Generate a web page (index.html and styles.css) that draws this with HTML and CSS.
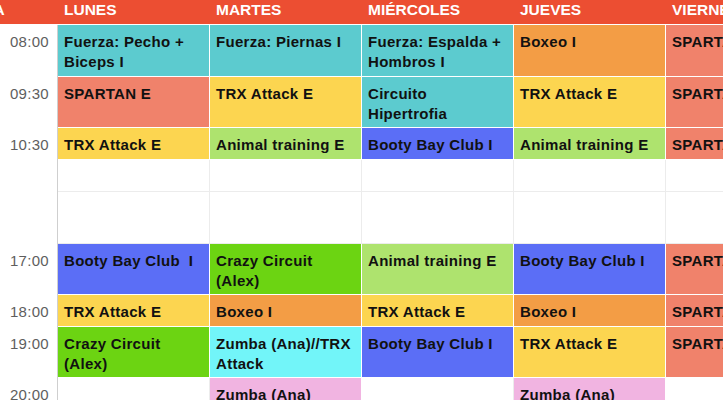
FILE: index.html
```html
<!DOCTYPE html>
<html lang="es">
<head>
<meta charset="utf-8">
<title>Horario</title>
<link rel="stylesheet" href="styles.css">
</head>
<body>
<div class="schedule">
  <div class="head head-time"><span class="clip">HORA</span></div>
  <div class="head">LUNES</div>
  <div class="head">MARTES</div>
  <div class="head">MIÉRCOLES</div>
  <div class="head">JUEVES</div>
  <div class="head">VIERNES</div>

  <div class="time">08:00</div>
  <div class="cell teal">Fuerza: Pecho + Biceps I</div>
  <div class="cell teal">Fuerza: Piernas I</div>
  <div class="cell teal">Fuerza: Espalda + Hombros I</div>
  <div class="cell orange">Boxeo I</div>
  <div class="cell salmon">SPARTAN E</div>

  <div class="time">09:30</div>
  <div class="cell salmon">SPARTAN E</div>
  <div class="cell yellow">TRX Attack E</div>
  <div class="cell teal">Circuito Hipertrofia</div>
  <div class="cell yellow">TRX Attack E</div>
  <div class="cell salmon">SPARTAN E</div>

  <div class="time">10:30</div>
  <div class="cell yellow">TRX Attack E</div>
  <div class="cell lime">Animal training E</div>
  <div class="cell blue">Booty Bay Club I</div>
  <div class="cell lime">Animal training E</div>
  <div class="cell salmon">SPARTAN E</div>

  <div class="time"></div>
  <div class="cell empty"></div>
  <div class="cell empty"></div>
  <div class="cell empty"></div>
  <div class="cell empty"></div>
  <div class="cell empty"></div>

  <div class="time"></div>
  <div class="cell empty"></div>
  <div class="cell empty"></div>
  <div class="cell empty"></div>
  <div class="cell empty"></div>
  <div class="cell empty"></div>

  <div class="time">17:00</div>
  <div class="cell blue">Booty Bay Club&nbsp; I</div>
  <div class="cell green">Crazy Circuit (Alex)</div>
  <div class="cell lime">Animal training E</div>
  <div class="cell blue">Booty Bay Club I</div>
  <div class="cell salmon">SPARTAN E</div>

  <div class="time">18:00</div>
  <div class="cell yellow">TRX Attack E</div>
  <div class="cell orange">Boxeo I</div>
  <div class="cell yellow">TRX Attack E</div>
  <div class="cell orange">Boxeo I</div>
  <div class="cell salmon">SPARTAN E</div>

  <div class="time">19:00</div>
  <div class="cell green">Crazy Circuit (Alex)</div>
  <div class="cell cyan">Zumba (Ana)//TRX Attack</div>
  <div class="cell blue">Booty Bay Club I</div>
  <div class="cell yellow">TRX Attack E</div>
  <div class="cell salmon">SPARTAN E</div>

  <div class="time">20:00</div>
  <div class="cell empty"></div>
  <div class="cell pink">Zumba (Ana)</div>
  <div class="cell empty"></div>
  <div class="cell pink">Zumba (Ana)</div>
  <div class="cell empty"></div>
</div>
</body>
</html>
```
FILE: styles.css
```css
html, body {
  margin: 0;
  padding: 0;
  background: #ffffff;
  overflow: hidden;
}

.schedule {
  display: grid;
  grid-template-columns: 58px repeat(5, 152px);
  grid-template-rows: 25px 52px 51px 32px 32px 52px 51px 32px 51px 51px;
  width: 818px;
  font-family: "Liberation Sans", Arial, sans-serif;
  font-size: 15px;
  line-height: 20px;
  color: #111111;
}

.head {
  background: #ec4e32;
  color: #ffffff;
  font-weight: 700;
  font-size: 15.5px;
  line-height: 18px;
  padding: 1px 0 0 6px;
  border-bottom: 1px solid #ffffff;
  white-space: nowrap;
  overflow: hidden;
}

.head-time {
  padding-left: 0;
}

.clip {
  display: inline-block;
  margin-left: -41px;
}

.time {
  color: #5e5e5e;
  text-align: right;
  letter-spacing: 0.3px;
  padding: 7px 8px 0 0;
  border-right: 1px solid #cfcfcf;
}

.cell {
  padding: 7px 8px 0 6px;
  font-weight: 700;
  letter-spacing: 0.3px;
  border-right: 1px solid #ffffff;
  border-bottom: 1px solid #ffffff;
  white-space: normal;
}

.empty {
  background: #ffffff;
  border-right-color: #ececec;
  border-bottom-color: #ececec;
}

.teal { background: #5ccbcf; }
.salmon { background: #f0826b; }
.yellow { background: #fcd550; }
.orange { background: #f39d45; }
.lime { background: #aee36e; }
.blue { background: #5b6ef6; }
.green { background: #6cd412; }
.cyan { background: #72f5f9; }
.pink { background: #f1b4e1; }
```
